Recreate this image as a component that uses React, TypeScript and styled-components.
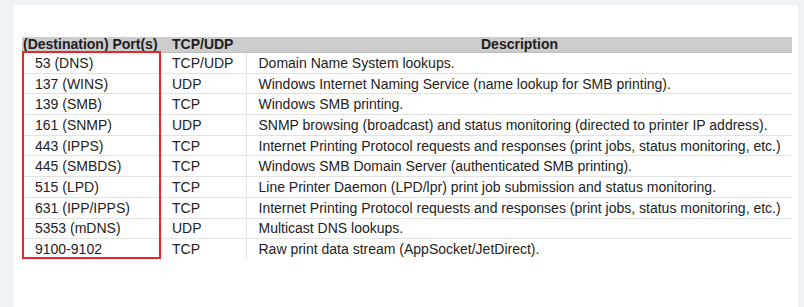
import styled, { createGlobalStyle } from "styled-components";

const GlobalStyle = createGlobalStyle`
  html, body {
    margin: 0;
    padding: 0;
    background: #eff3f8;
  }
  body {
    font-family: "Liberation Sans", Arial, sans-serif;
  }
`;

interface PortRow {
  port: string;
  proto: string;
  desc: string;
}

const rows: PortRow[] = [
  { port: "53 (DNS)", proto: "TCP/UDP", desc: "Domain Name System lookups." },
  { port: "137 (WINS)", proto: "UDP", desc: "Windows Internet Naming Service (name lookup for SMB printing)." },
  { port: "139 (SMB)", proto: "TCP", desc: "Windows SMB printing." },
  { port: "161 (SNMP)", proto: "UDP", desc: "SNMP browsing (broadcast) and status monitoring (directed to printer IP address)." },
  { port: "443 (IPPS)", proto: "TCP", desc: "Internet Printing Protocol requests and responses (print jobs, status monitoring, etc.)" },
  { port: "445 (SMBDS)", proto: "TCP", desc: "Windows SMB Domain Server (authenticated SMB printing)." },
  { port: "515 (LPD)", proto: "TCP", desc: "Line Printer Daemon (LPD/lpr) print job submission and status monitoring." },
  { port: "631 (IPP/IPPS)", proto: "TCP", desc: "Internet Printing Protocol requests and responses (print jobs, status monitoring, etc.)" },
  { port: "5353 (mDNS)", proto: "UDP", desc: "Multicast DNS lookups." },
  { port: "9100-9102", proto: "TCP", desc: "Raw print data stream (AppSocket/JetDirect)." },
];

const App = (): JSX.Element => {
  return (
    <Page>
      <GlobalStyle />
      <Card>
        <TableWrap>
          <PortTable>
            <colgroup>
              <col style={{ width: 138 }} />
              <col style={{ width: 86 }} />
              <col />
            </colgroup>
            <thead>
              <tr>
                <HeadCell>(Destination) Port(s)</HeadCell>
                <HeadCell $pad={12}>TCP/UDP</HeadCell>
                <HeadCell $center>Description</HeadCell>
              </tr>
            </thead>
            <tbody>
              {rows.map((r) => (
                <tr key={r.port}>
                  <Cell $pad={13}>{r.port}</Cell>
                  <Cell $pad={12}>{r.proto}</Cell>
                  <Cell $pad={12} $divider>
                    {r.desc}
                  </Cell>
                </tr>
              ))}
            </tbody>
          </PortTable>
          <Highlight />
        </TableWrap>
      </Card>
    </Page>
  );
};

export default App;

const Page = styled.div`
  width: 804px;
  height: 307px;
  padding: 5px 6px 0 14px;
  box-sizing: border-box;
  overflow: hidden;
`;

const Card = styled.div`
  background: #ffffff;
  height: 100%;
  padding: 32px 6px 0 8px;
  box-sizing: border-box;
`;

const TableWrap = styled.div`
  position: relative;
  width: 770px;
`;

const PortTable = styled.table`
  width: 770px;
  table-layout: fixed;
  border-collapse: collapse;
  font-size: 14px;
  color: #222222;
`;

const HeadCell = styled.th<{ $pad?: number; $center?: boolean }>`
  background: #cccccc;
  border-bottom: 1px solid #bdbdbd;
  height: 15px;
  padding: 0 0 0 ${(p) => p.$pad ?? 1}px;
  font-weight: bold;
  text-align: ${(p) => (p.$center ? "center" : "left")};
  line-height: 15px;
  white-space: nowrap;
  color: #1e1e1e;
`;

const Cell = styled.td<{ $pad: number; $divider?: boolean }>`
  height: 20.7px;
  padding: 0 0 0 ${(p) => p.$pad}px;
  border-top: 1px solid #e2e2e2;
  border-left: ${(p) => (p.$divider ? "1px solid #e2e2e2" : "none")};
  white-space: nowrap;
  line-height: 16px;
  box-sizing: border-box;
`;

const Highlight = styled.div`
  position: absolute;
  left: 0;
  top: 14px;
  width: 139px;
  bottom: 0;
  border: 2px solid #e8262b;
  box-sizing: border-box;
  pointer-events: none;
`;
